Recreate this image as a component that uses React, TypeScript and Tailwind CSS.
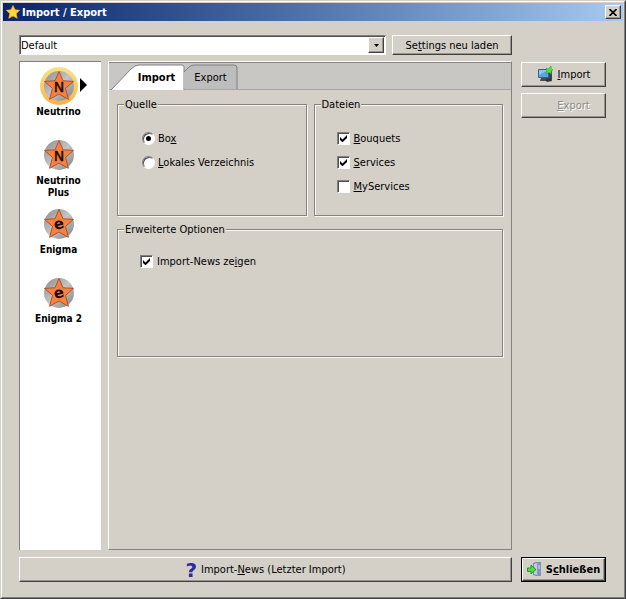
import type { ReactNode } from 'react';
import { clsx } from 'clsx';

interface SidebarItemProps {
    label: string;
    glyph: 'N' | 'e';
    selected?: boolean;
}

interface OptionProps {
    type: 'checkbox' | 'radio';
    name: string;
    checked?: boolean;
    className?: string;
    children: ReactNode;
}

interface GroupProps {
    title: string;
    className?: string;
    children: ReactNode;
}

const raised =
    'border border-t-white border-l-white border-r-[#404040] border-b-[#404040] shadow-[inset_-1px_-1px_0_#9a968e]';

const sidebarItems: SidebarItemProps[] = [
    { label: 'Neutrino', glyph: 'N', selected: true },
    { label: 'Neutrino Plus', glyph: 'N' },
    { label: 'Enigma', glyph: 'e' },
    { label: 'Enigma 2', glyph: 'e' },
];

function StarBadge({ glyph, selected }: { glyph: 'N' | 'e'; selected?: boolean }) {
    return (
        <svg width="40" height="40" viewBox="0 0 40 40" aria-hidden="true">
            <defs>
                <linearGradient id="disc" x1="0" y1="0" x2="1" y2="1">
                    <stop offset="0" stopColor="#8b8b8b" />
                    <stop offset="0.5" stopColor="#c4c4c4" />
                    <stop offset="1" stopColor="#808080" />
                </linearGradient>
                <linearGradient id="halo" x1="0" y1="0" x2="0" y2="1">
                    <stop offset="0" stopColor="#f8e08a" />
                    <stop offset="0.6" stopColor="#fbc860" />
                    <stop offset="1" stopColor="#fbae4c" />
                </linearGradient>
            </defs>
            {selected && <circle cx="20" cy="20" r="19" fill="url(#halo)" />}
            <circle cx="20" cy="20" r="15" fill="url(#disc)" />
            <path
                d="M20 5.500l4 9.300 10.500.6-8 7 2.900 10.900L20 28l-9.400 5.300 2.900-10.900-8-7 10.500-.6z"
                fill="#f9813f"
                stroke="#a9542a"
                strokeWidth="1"
            />
            {glyph === 'N' ? (
                <text x="20" y="26" textAnchor="middle" fontSize="14" className="fill-[#1c0d06] font-['DejaVu_Sans',sans-serif] font-normal stroke-[#1c0d06] stroke-[0.5]">
                    N
                </text>
            ) : (
                <text x="20" y="25" textAnchor="middle" fontSize="15" transform="rotate(-14 20 21)" className="fill-[#1c0d06] font-['DejaVu_Sans',sans-serif] font-bold">
                    e
                </text>
            )}
        </svg>
    );
}

function SidebarItem({ label, glyph, selected }: SidebarItemProps) {
    return (
        <button type="button" className="relative flex h-[69px] w-full flex-col items-center text-[10px] font-bold">
            <StarBadge glyph={glyph} selected={selected} />
            <span className="w-14 leading-3">{label}</span>
            {selected && (
                <svg className="absolute top-3 right-2.5" width="7" height="14" viewBox="0 0 7 14" aria-hidden="true">
                    <path d="M0 0l7 7-7 7z" />
                </svg>
            )}
        </button>
    );
}

function Option({ type, name, checked, className, children }: OptionProps) {
    return (
        <label className={clsx('flex h-3.5 items-center', className)}>
            <span className="grid size-[13px] place-items-center">
                <input
                    type={type}
                    name={name}
                    defaultChecked={checked}
                    className={clsx(
                        'peer col-start-1 row-start-1 size-[13px] appearance-none border border-t-[#808080] border-l-[#808080] border-r-white border-b-white bg-white shadow-[inset_1px_1px_0_#505050]',
                        type === 'radio' && 'rounded-full',
                    )}
                />
                {type === 'radio' ? (
                    <span className="pointer-events-none col-start-1 row-start-1 hidden size-[5px] rounded-full bg-black peer-checked:block" />
                ) : (
                    <svg className="pointer-events-none col-start-1 row-start-1 hidden peer-checked:block" width="7" height="7" viewBox="0 0 7 7" aria-hidden="true">
                        <path d="M0 2l2.500 2.500L7 0v3L2.500 7.300 0 5z" />
                    </svg>
                )}
            </span>
            <span>{children}</span>
        </label>
    );
}

function Group({ title, className, children }: GroupProps) {
    return (
        <fieldset className={clsx('min-w-0 border border-[#86837d] shadow-[1px_1px_0_#f8f6f0,inset_1px_1px_0_#f8f6f0]', className)}>
            <legend className="ml-1.5 bg-[#d4d0c8] px-px">{title}</legend>
            {children}
        </fieldset>
    );
}

function ImportIcon() {
    return (
        <svg width="17" height="17" viewBox="0 0 17 17" aria-hidden="true">
            <rect x="8" y="5" width="7" height="9" rx="1" fill="#3c4650" />
            <rect x="1" y="3" width="11" height="9" rx="1" fill="#3a5f86" />
            <rect x="2" y="4" width="9" height="7" fill="#5aa5e4" />
            <path d="M2 4h9L2 9z" fill="#8cc6f2" />
            <path d="M4 12h5l1 3H3z" fill="#4a4a4c" />
            <path d="M8 14l6-2 1 3-5 1z" fill="#30343a" />
            <path d="M9 2l2 1 3-3 .5 2.500L16 4l-2 1 .5 3-2.500-1.500L9.500 8 10 5z" fill="#4fe03a" stroke="#229c24" strokeWidth=".5" />
        </svg>
    );
}

function ExitIcon() {
    return (
        <svg width="15" height="15" viewBox="0 0 15 15" aria-hidden="true">
            <path d="M6 1l3-1h5v14H9l-3-1z" fill="#7d8bb4" />
            <path d="M7 2l3-1v12l-3-1z" fill="#c1cce8" />
            <path d="M10 1h4v13h-4z" fill="#8592bd" />
            <path d="M11 3h2v4h-2z" fill="#aebbe0" />
            <path d="M.5 6H4V3l5 4.500L4 12V9.500H.5z" fill="#52dc3c" stroke="#219a26" />
        </svg>
    );
}

export default function App() {
    return (
        <div className="flex min-h-screen flex-col border border-t-[#d4d0c8] border-l-[#d4d0c8] border-r-[#404040] border-b-[#404040] bg-[#d4d0c8] font-['DejaVu_Sans_Condensed','DejaVu_Sans',sans-serif] text-[11px] leading-[13px] text-black">
            <div className="flex grow flex-col border border-t-white border-l-white border-r-[#808080] border-b-[#808080] p-px">
                <header className="flex h-[18px] items-center bg-linear-to-r from-[#0a246a] to-[#a6caf0] pr-0.5 pl-[3px]">
                    <svg width="14" height="14" viewBox="0 0 14 14" aria-hidden="true">
                        <path
                            d="M7 .5l2 4.300 4.700.5-3.500 3.200 1 4.800L7 10.900l-4.200 2.400 1-4.800L.3 5.300 5 4.800z"
                            fill="#ffd83a"
                            stroke="#f3a51c"
                            strokeWidth=".8"
                        />
                    </svg>
                    <h1 className="ml-0.5 grow font-bold text-white">Import / Export</h1>
                    <button type="button" aria-label="Schließen" className={clsx('grid h-3.5 w-4 place-items-center bg-[#d4d0c8]', raised)}>
                        <svg width="8" height="7" viewBox="0 0 8 7" aria-hidden="true">
                            <path d="M.5 0l7 7M7.500 0l-7 7" stroke="black" strokeWidth="1.600" />
                        </svg>
                    </button>
                </header>

                <main className="flex grow gap-[9px] py-3.5 pr-[17px] pl-4">
                    <div className="flex grow flex-col">
                        <div className="flex gap-1.5">
                            <div className="relative flex h-5 grow border border-t-[#808080] border-l-[#808080] border-r-white border-b-white bg-white shadow-[inset_1px_1px_0_#505050]">
                                <select aria-label="Profil" className="w-full appearance-none bg-transparent pl-px">
                                    <option>Default</option>
                                </select>
                                <span className={clsx('pointer-events-none absolute top-px right-px bottom-px grid w-4 place-items-center bg-[#d4d0c8]', raised)}>
                                    <svg width="5" height="3" viewBox="0 0 5 3" aria-hidden="true">
                                        <path d="M0 0h5L2.500 3z" />
                                    </svg>
                                </span>
                            </div>
                            <button type="button" className={clsx('h-5 w-30', raised)}>
                                Se<u>t</u>tings neu laden
                            </button>
                        </div>

                        <div className="mt-1.5 flex grow gap-[7px]">
                            <nav className="w-[82px] border-t border-l border-[#808080] bg-white pt-1 pr-1">
                                {sidebarItems.map((item) => (
                                    <SidebarItem key={item.label} {...item} />
                                ))}
                            </nav>

                            <section className="grow border border-t-white border-l-white border-r-[#86837d] border-b-[#86837d]">
                                <div role="tablist" className="flex h-7 items-end border-t border-b border-[#86837d] border-b-[#a5a5a2] bg-[#c8c7c3] pl-0.5">
                                    <button type="button" role="tab" aria-selected="true" className="relative h-6 w-[73px] pl-[18px] font-bold">
                                        <svg className="absolute inset-0 size-full overflow-visible" viewBox="0 0 73 24" aria-hidden="true">
                                            <path d="M0 25L20 4Q24 0 28 0H71Q73 0 73 2V25z" fill="white" />
                                            <path d="M0 25L20 4Q24 0 28 0H71Q73 0 73 2V25" fill="none" stroke="#808080" />
                                        </svg>
                                        <span className="relative">Import</span>
                                    </button>
                                    <button type="button" role="tab" aria-selected="false" className="relative h-6 w-[53px]">
                                        <svg className="absolute inset-0 size-full overflow-visible" viewBox="0 0 53 24" aria-hidden="true">
                                            <path d="M0 24V7L5 2Q7 0 10 0H50Q53 0 53 3V24z" fill="#bdbdbd" />
                                            <path d="M0 7L5 2Q7 0 10 0H50Q53 0 53 3V24" fill="none" stroke="#808080" />
                                        </svg>
                                        <span className="relative">Export</span>
                                    </button>
                                </div>

                                <div className="grid grid-cols-2 gap-[7px] px-2 pt-2">
                                    <Group title="Quelle" className="h-[118px]">
                                        <div className="flex flex-col gap-2.5 pt-5 pl-6">
                                            <Option type="radio" name="quelle" checked className="gap-[3px]">
                                                Bo<u>x</u>
                                            </Option>
                                            <Option type="radio" name="quelle" className="gap-[3px]">
                                                <u>L</u>okales Verzeichnis
                                            </Option>
                                        </div>
                                    </Group>
                                    <Group title="Dateien" className="h-[118px]">
                                        <div className="flex flex-col gap-2.5 pt-5 pl-[22px]">
                                            <Option type="checkbox" name="bouquets" checked className="gap-1">
                                                <u>B</u>ouquets
                                            </Option>
                                            <Option type="checkbox" name="services" checked className="gap-1">
                                                <u>S</u>ervices
                                            </Option>
                                            <Option type="checkbox" name="myservices" className="gap-1">
                                                <u>M</u>yServices
                                            </Option>
                                        </div>
                                    </Group>
                                    <Group title="Erweiterte Optionen" className="col-span-2 h-[134px]">
                                        <div className="pt-[18px] pl-[22px]">
                                            <Option type="checkbox" name="news" checked className="gap-1">
                                                Import-News ze<u>i</u>gen
                                            </Option>
                                        </div>
                                    </Group>
                                </div>
                            </section>
                        </div>

                        <button type="button" className={clsx('mt-[7px] flex h-[25px] items-center justify-center gap-1', raised)}>
                            <span aria-hidden="true" className="font-['DejaVu_Sans',sans-serif] text-xl leading-5 font-bold text-[#2c2a9c]">
                                ?
                            </span>
                            <span>
                                Import-<u>N</u>ews (Letzter Import)
                            </span>
                        </button>
                    </div>

                    <aside className="flex w-[85px] flex-col pt-[27px]">
                        <button type="button" className={clsx('flex h-[25px] items-center justify-center gap-1', raised)}>
                            <ImportIcon />
                            <span>
                                <u>I</u>mport
                            </span>
                        </button>
                        <button
                            type="button"
                            disabled
                            className={clsx('mt-1.5 flex h-[25px] items-center justify-center pl-5 text-[#8f8c86] text-shadow-[1px_1px_0_white]', raised)}
                        >
                            <span>
                                <u>E</u>xport
                            </span>
                        </button>
                        <button type="button" className="mt-auto flex h-[25px] border border-black font-bold">
                            <span className={clsx('flex size-full items-center justify-center gap-1', raised)}>
                                <ExitIcon />
                                <span>
                                    S<u>c</u>hließen
                                </span>
                            </span>
                        </button>
                    </aside>
                </main>
            </div>
        </div>
    );
}
